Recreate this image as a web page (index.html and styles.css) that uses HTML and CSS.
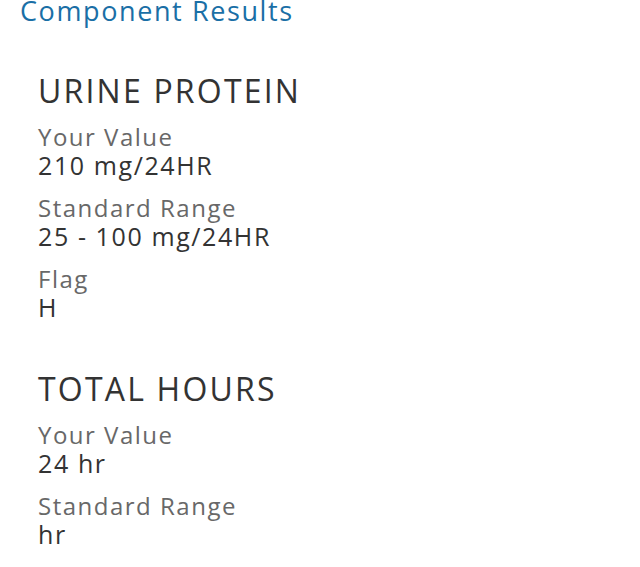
FILE: index.html
```html
<!DOCTYPE html>
<html>
<head>
<meta charset="utf-8">
<link rel="stylesheet" href="styles.css">
</head>
<body>
<div class="page">
  <h1 class="page-title">Component Results</h1>
  <section class="component">
    <h2 class="component-name">URINE PROTEIN</h2>
    <div class="field"><div class="label">Your Value</div><div class="value">210 mg/24HR</div></div>
    <div class="field"><div class="label">Standard Range</div><div class="value">25 - 100 mg/24HR</div></div>
    <div class="field"><div class="label">Flag</div><div class="value">H</div></div>
  </section>
  <section class="component">
    <h2 class="component-name">TOTAL HOURS</h2>
    <div class="field"><div class="label">Your Value</div><div class="value">24 hr</div></div>
    <div class="field"><div class="label">Standard Range</div><div class="value">hr</div></div>
  </section>
</div>
</body>
</html>
```
FILE: styles.css
```css
html, body {
  margin: 0;
  padding: 0;
  background: #ffffff;
  overflow: hidden;
}
body {
  font-family: "Open Sans", "Noto Sans", sans-serif;
}
.page {
  padding: 0 20px;
  margin-top: -9px;
}
.page-title {
  margin: 0;
  font-size: 27px;
  line-height: 40px;
  font-weight: 400;
  color: #1a6fa6;
  letter-spacing: 1.6px;
}
.component {
  padding-left: 18px;
  display: flex;
  flex-direction: column;
  gap: 13px;
}
.component:first-of-type { margin-top: 40px; }
.component + .component { margin-top: 47px; }
.component-name {
  margin: 0 0 -2px;
  font-size: 32px;
  line-height: 40px;
  font-weight: 400;
  color: #333333;
  letter-spacing: 2.2px;
}
.field {
  display: flex;
  flex-direction: column;
}
.label {
  font-size: 24px;
  line-height: 29px;
  color: #686868;
  letter-spacing: 1.5px;
}
.value {
  font-size: 25px;
  line-height: 29px;
  color: #333333;
  letter-spacing: 1.6px;
}
```
